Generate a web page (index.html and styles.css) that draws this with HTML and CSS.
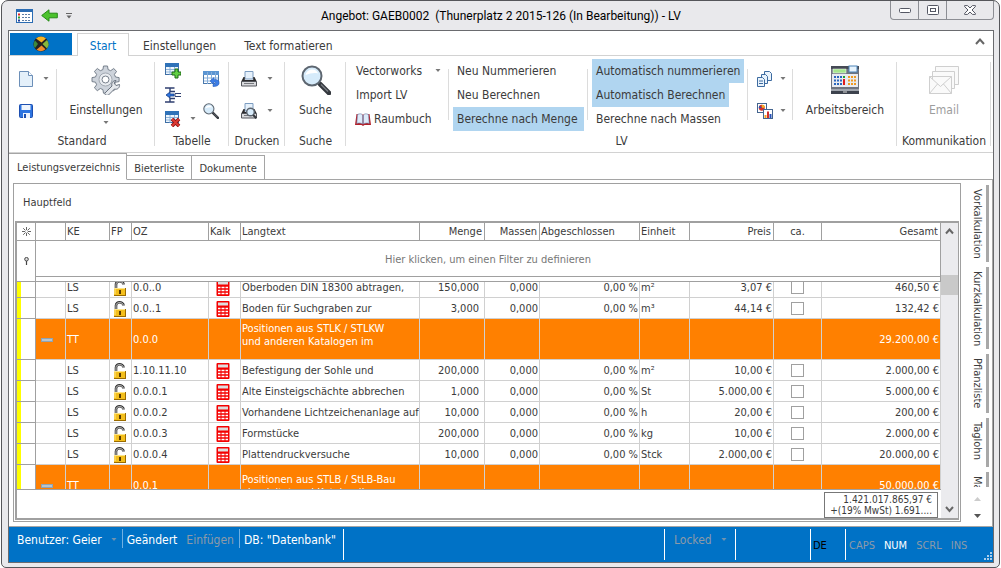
FILE: index.html
```html
<!DOCTYPE html>
<html lang="de">
<head>
<meta charset="utf-8">
<title>Angebot: GAEB0002 - LV</title>
<link rel="stylesheet" href="styles.css">
</head>
<body>
<svg class="defs" aria-hidden="true">
  <symbol id="i-lock" viewBox="0 0 14 16">
    <path d="M3 8V4.500C3 2 4.800 1.300 6.500 1.300S10.500 2.200 10.500 4.500" fill="none" stroke="#333" stroke-width="2.600"/>
    <path d="M3 8V4.500C3 2.400 5 1.500 6.500 1.500S10.300 2.400 10.300 4.300" fill="none" stroke="#d5d5d5" stroke-width=".9"/>
    <rect x="1" y="8" width="12" height="8" fill="#f4bf1c"/>
    <path d="M1 8.500h12M2 8v6" stroke="#fde58a" fill="none"/>
    <path d="M1 15.500h12M12.500 8v7" stroke="#9a6b00" fill="none"/>
    <rect x="6" y="10" width="2" height="4" fill="#5a3b00"/>
  </symbol>
  <symbol id="i-calc" viewBox="0 0 14 16">
    <rect x=".5" y="0" width="13" height="16" rx="1" fill="#f40000"/>
    <rect x="2" y="1.500" width="10" height="3" fill="#dedede"/>
    <path d="M2 7.500h2.500m1 0h3m1 0h2.500M2 10.500h2.500m1 0h3m1 0h2.500M2 13.500h2.500m1 0h3m1 0h2.500" stroke="#fff" stroke-width="1.400"/>
  </symbol>
  <symbol id="i-down" viewBox="0 0 6 4"><path d="M0.500 0h5L3 3z" fill="currentColor"/></symbol>
  <symbol id="i-table" viewBox="0 0 16 16">
    <rect x=".5" y=".5" width="13" height="11" fill="#eef6fd" stroke="#3f6fa5"/>
    <rect x="0" y="0" width="14" height="4" fill="#2f72b8"/>
    <path d="M1 6.500h12M1 9h12M5 4v8M9.500 4v8" stroke="#83add6" stroke-width=".9"/>
  </symbol>
  <symbol id="i-glass" viewBox="0 0 30 30">
    <path d="M19 19l9 9" stroke="#34383e" stroke-width="4.600" stroke-linecap="round"/>
    <path d="M20 19.500l7 7" stroke="#7b8087" stroke-width="1.200"/>
    <circle cx="11" cy="11" r="9.500" fill="#d6ebfa" stroke="#5d6670" stroke-width="2"/>
    <path d="M4.500 10c1-4 4-5.500 7-5.500s5 2 5.500 4c-4-1-8 0-12.500 1.500z" fill="#fff"/>
  </symbol>
  <symbol id="i-printer" viewBox="0 0 16 16">
    <path d="M4 8V.5h8V8z" fill="#e6f1fb" stroke="#7c9cc0"/>
    <path d="M2.500 6L.5 10v3h15v-3l-2-4h-1.300v3H3.800V6z" fill="#2c2c2e"/>
    <path d="M.5 10.500h15v4.500H.5z" fill="#d9dadd" stroke="#55575c"/>
    <path d="M3 12.500h10" stroke="#77797e"/>
  </symbol>
</svg>

<div class="window">
  <header class="titlebar">
    <div class="quick">
      <svg width="17" height="14" viewBox="0 0 17 14"><rect x=".5" y=".5" width="16" height="13" fill="#fff" stroke="#2b6cb3"/><path d="M0 1h17v2H0z" fill="#2b6cb3"/><path d="M2 5.500h2" stroke="#e02020" stroke-width="2"/><path d="M2 8.500h2" stroke="#2a9a2a" stroke-width="2"/><path d="M2 11.500h2" stroke="#233f9a" stroke-width="2"/><path d="M6 5.500h9M6 8.500h9M6 11.500h9" stroke="#5d7da5" stroke-dasharray="2 1"/></svg>
      <svg width="17" height="13" viewBox="0 0 17 13"><path d="M.7 6.500L8 .8v3.400h8.300v4.600H8v3.400z" fill="#4cc22d" stroke="#268a17"/></svg>
      <svg width="6" height="6" viewBox="0 0 6 6"><path d="M0 .5h6" stroke="#666"/><path d="M0.500 2.500h5L3 5.500z" fill="#666"/></svg>
    </div>
    <h1 class="title">Angebot: GAEB0002&nbsp; (Thunerplatz 2 2015-126 (In Bearbeitung)) - LV</h1>
    <div class="winbuttons">
      <button aria-label="Minimieren"><svg width="12" height="5"><rect x=".5" y=".5" width="11" height="4" rx="1" fill="#fff" stroke="#555864"/></svg></button>
      <button aria-label="Maximieren"><svg width="12" height="10"><rect x=".5" y=".5" width="11" height="9" rx="1" fill="#fff" stroke="#555864"/><rect x="3.500" y="3.500" width="5" height="3" fill="#fff" stroke="#555864"/></svg></button>
      <button class="close" aria-label="Schließen"><svg width="12" height="10" viewBox="0 0 12 10"><path d="M.6.600h3L6 3 8.400.600h3v1L8 5l3.400 3.400v1h-3L6 7 3.600 9.400h-3v-1L4 5 .6 1.600z" fill="#fff" stroke="#555864"/></svg></button>
    </div>
  </header>

  <main class="client">
    <nav class="ribbon-tabs">
      <button class="app" aria-label="Anwendungsmenü"><svg width="16" height="16" viewBox="0 0 16 16"><circle cx="8" cy="8" r="7.600" fill="#222"/><path d="M3 2.500a7.500 7.500 0 0 1 10 0L8.500 6.500z" fill="#f5b324"/><path d="M14 4a7 7 0 0 1 0 8.500L9.500 8z" fill="#86b83b"/><path d="M3.500 13.800a7.500 7.500 0 0 0 9-.5L8.500 9.500z" fill="#f08a2c"/><path d="M2 4.500C0 7.500.5 10.500 2 12l3-4z" fill="#3d8a3c"/></svg></button>
      <button class="rtab on">Start</button>
      <button class="rtab">Einstellungen</button>
      <button class="rtab">Text formatieren</button>
      <button class="collapse" aria-label="Menüband minimieren"><svg width="10" height="7"><path d="M1 6l4-4.500L9 6" fill="none" stroke="#666" stroke-width="2"/></svg></button>
    </nav>

    <div class="ribbon">
      <section class="group g-standard">
        <div class="items">
          <div class="pair">
            <button aria-label="Neu"><svg width="14" height="16" viewBox="0 0 14 16"><path d="M.5.500h9l4 4v11H.5z" fill="#e4f0fa" stroke="#6c8fb8"/><path d="M9.500.500v4h4" fill="#fff" stroke="#6c8fb8"/></svg><svg class="dd"><use href="#i-down"/></svg></button>
            <button aria-label="Speichern"><svg width="14" height="14" viewBox="0 0 14 14"><rect x=".5" y=".5" width="13" height="13" rx="1" fill="#2d74e0" stroke="#1d4fb0"/><rect x="2.500" y="1" width="9" height="5" fill="#eef4fc"/><rect x="4" y="9" width="7" height="5" fill="#eef4fc"/><rect x="5" y="10" width="2" height="4" fill="#1d4fb0"/></svg></button>
          </div>
          <button class="big"><svg width="30" height="30" viewBox="0 0 30 30"><path d="M12.500 1h4l.6 3.600 2.600 1.100 3-2.200 2.900 2.900-2.200 3 1.100 2.600 3.600.6v4l-3.600.6-1.100 2.600 2.200 3-2.900 2.900-3-2.200-2.600 1.100-.6 3.600h-4l-.6-3.600-2.600-1.100-3 2.200-2.900-2.900 2.200-3-1.100-2.600L1 16.600v-4l3.500-.6 1.100-2.600-2.200-3 2.900-2.900 3 2.200 2.600-1.100z" fill="#cdd3db" stroke="#77808c"/><circle cx="14.500" cy="14.500" r="6.500" fill="#e9ecf0" stroke="#a1a8b1"/><circle cx="14.500" cy="14.500" r="3.500" fill="#fff" stroke="#77808c"/><path d="M14 28l7-7c-1-3 1-5.500 4-5.500l-2 2.500 2 2.500 3.500-1c.5 3-2 5.500-5 4.500l-6 6c-2 1-4.500-.5-3.500-2z" fill="#e6e9ed" stroke="#6b7480"/></svg><span>Einstellungen</span><svg class="dd"><use href="#i-down"/></svg></button>
        </div>
        <h2>Standard</h2>
      </section>

      <section class="group g-tabelle">
        <div class="items">
          <div class="trio">
            <button aria-label="Zeile einfügen"><svg width="16" height="16" viewBox="0 0 16 16"><use href="#i-table"/><path d="M9 7h3v3h3v3h-3v3H9v-3H6v-3h3z" transform="translate(1 -1)" fill="#62d044" stroke="#1e6b16"/></svg></button>
            <button aria-label="Einrücken"><svg width="16" height="16" viewBox="0 0 16 16"><path d="M0 1h9.500M0 15h9.500M5 1v3.500h5M5 15v-3.500h5" stroke="#2f3f70" stroke-width="1.400" fill="none"/><path d="M1 8l4-3v2h4v2H5v2z" fill="#2d74e0" stroke="#173f86" stroke-width=".8"/><path d="M16 6.500h-6v3h6" fill="#fff" stroke="#2f3f70"/></svg></button>
            <button aria-label="Zeile löschen"><svg width="16" height="16" viewBox="0 0 16 16"><use href="#i-table"/><path d="M7 8l7 7M14 8l-7 7" stroke="#8a1010" stroke-width="3.600"/><path d="M7 8l7 7M14 8l-7 7" stroke="#dc3a33" stroke-width="2"/></svg><svg class="dd"><use href="#i-down"/></svg></button>
          </div>
          <div class="pair">
            <button aria-label="Aktualisieren"><svg width="17" height="16" viewBox="0 0 17 16"><rect x=".5" y=".5" width="15" height="12" fill="#fff" stroke="#4a79ad"/><rect width="16" height="4" fill="#5b95d2"/><path d="M1 7h14M1 10h14M4.500 1v12M8.500 1v12M12.500 1v12" stroke="#86aed9"/><path d="M7 10l4-3.500v2.200c4-.5 5.500 1.500 5 4-.4 1.800-2.500 3-6 2.800v-2c3.500.2 4-2.500 1-2.500v2.500z" fill="#3c7de6" stroke="#2a61c0" stroke-width=".6"/></svg></button>
            <button aria-label="Suchen in Tabelle"><svg width="16" height="16"><use href="#i-glass"/></svg></button>
          </div>
        </div>
        <h2>Tabelle</h2>
      </section>

      <section class="group g-drucken">
        <div class="items">
          <div class="pair">
            <button aria-label="Drucken"><svg width="16" height="16"><use href="#i-printer"/></svg><svg class="dd"><use href="#i-down"/></svg></button>
            <button aria-label="Seitenansicht"><svg width="16" height="16" viewBox="0 0 16 16"><use href="#i-printer"/><circle cx="9.500" cy="9" r="3.800" fill="#d8ecfb" stroke="#59626c" stroke-width="1.400"/><path d="M12.300 12l3 3.300" stroke="#33373d" stroke-width="2"/></svg><svg class="dd"><use href="#i-down"/></svg></button>
          </div>
        </div>
        <h2>Drucken</h2>
      </section>

      <section class="group g-suche">
        <div class="items">
          <button class="big"><svg width="30" height="30"><use href="#i-glass"/></svg><span>Suche</span></button>
        </div>
        <h2>Suche</h2>
      </section>

      <section class="group g-lv">
        <div class="items">
          <div class="list l-import">
            <button>Vectorworks<svg class="dd"><use href="#i-down"/></svg></button>
            <button>Import LV</button>
            <button class="book"><svg width="16" height="13" viewBox="0 0 16 13"><path d="M1.500 1H7l1 1 1-1h5.500L16 12H9.500L8 13l-1.500-1H0z" fill="#b3202a"/><path d="M2.500 1.500C4.500.500 6.500.500 7.600 2v9C6 9.800 3.500 9.800 1.800 10.500zM13.500 1.500c-2-1-4-1-5.100.5v9c1.600-1.200 4.100-1.200 5.800-.5z" fill="#dcebfa" stroke="#6e7fa6" stroke-width=".6"/></svg>Raumbuch</button>
          </div>
          <div class="list l-new">
            <button>Neu Nummerieren</button>
            <button>Neu Berechnen</button>
            <button class="on">Berechne nach Menge</button>
          </div>
          <div class="list l-auto">
            <button class="on">Automatisch nummerieren</button>
            <button class="on">Automatisch Berechnen</button>
            <button>Berechne nach Massen</button>
          </div>
          <div class="pair p-copy">
            <button aria-label="Kopieren"><svg width="16" height="16" viewBox="0 0 16 16"><g fill="#e9f3fc" stroke="#3d6ba0"><path d="M7.500.500h5l2 2v7h-7z"/><path d="M4.500 3.500h4l2 2v7h-6z"/><path d="M.5 6.500h5l2 2v7h-7z"/></g><path d="M2 10h4M2 12.500h4" stroke="#3d6ba0"/></svg><svg class="dd"><use href="#i-down"/></svg></button>
            <button aria-label="Diagramme"><svg width="16" height="16" viewBox="0 0 16 16"><rect x=".5" y=".5" width="9" height="9" fill="#fff" stroke="#44658f"/><circle cx="4.800" cy="4.800" r="3" fill="#d2302b"/><path d="M4.800 4.800V1.800a3 3 0 0 1 3 3z" fill="#f5b324"/><path d="M4.800 4.800l-3 .4a3 3 0 0 1 .8-2.400z" fill="#2852b8"/><rect x="6.500" y="6.500" width="9" height="9" fill="#fff" stroke="#44658f"/><path d="M8.500 15v-3" stroke="#f5a020" stroke-width="2"/><path d="M11 15V8.500" stroke="#d2302b" stroke-width="2"/><path d="M13.500 15v-4" stroke="#2852b8" stroke-width="2"/></svg><svg class="dd"><use href="#i-down"/></svg></button>
          </div>
          <button class="big"><svg width="30" height="30" viewBox="0 0 30 30"><rect x="1" y="1" width="28" height="28" fill="#6e747f"/><path d="M1 1h28v3H1z" fill="#454a55"/><path d="M2 9h26v13H2z" fill="#e8ebf0"/><rect x="3" y="4" width="13" height="4" fill="#a5e58d" stroke="#fff" stroke-width=".5"/><rect x="19" y="1" width="8" height="6" fill="#e6f3fd" stroke="#4c83b8"/><path d="M4 12h8M4 15.500h8M4 19h8" stroke="#2966bd" stroke-width="2" stroke-dasharray="2 1"/><path d="M18 12h9M18 15.500h9M18 19h9" stroke="#f09a20" stroke-width="2" stroke-dasharray="2 1"/><path d="M14 14v6" stroke="#e01d1d" stroke-width="2"/><path d="M13 12h2" stroke="#20a030" stroke-width="2"/><path d="M1 25h28" stroke="#d3d7dd"/><path d="M1 26h28v3H1z" fill="#3d424d"/><path d="M13 27h4" stroke="#ddd"/></svg><span>Arbeitsbereich</span></button>
        </div>
        <h2>LV</h2>
      </section>

      <section class="group g-komm">
        <div class="items">
          <button class="big" disabled><svg width="30" height="28" viewBox="0 0 30 28"><g fill="#fafafa" stroke="#cfcfcf"><path d="M6.500.500h23v18h-23z"/><path d="M3.500 5.500h22v17h-22z"/><path d="M.5 10.500h22v17H.5zM.5 10.500l11 10 11-10M.5 27.500l8-9.500M22.500 27.500l-8-9.500"/></g></svg><span>Email</span></button>
        </div>
        <h2>Kommunikation</h2>
      </section>
    </div>

    <div class="workspace">
      <nav class="doc-tabs">
        <button class="on">Leistungsverzeichnis</button>
        <button>Bieterliste</button>
        <button>Dokumente</button>
      </nav>
      <div class="page">
        <section class="panel">
          <h3>Hauptfeld</h3>
          <div class="grid">
            <div class="tables">
              <table class="head">
                <colgroup><col class="c-ind"><col class="c-exp"><col class="c-ke"><col class="c-fp"><col class="c-oz"><col class="c-kalk"><col><col class="c-menge"><col class="c-massen"><col class="c-abg"><col class="c-einheit"><col class="c-preis"><col class="c-ca"><col class="c-gesamt"></colgroup>
                <thead>
                  <tr><th class="mid"><svg width="9" height="9" viewBox="0 0 9 9"><path d="M4.500 0v9M0 4.500h9M1.200 1.200l6.600 6.600M7.800 1.200L1.200 7.800" stroke="#555" stroke-width=".9"/><circle cx="4.500" cy="4.500" r="1.400" fill="#fff"/></svg></th><th></th><th>KE</th><th>FP</th><th>OZ</th><th>Kalk</th><th>Langtext</th><th class="num">Menge</th><th class="num">Massen</th><th>Abgeschlossen</th><th>Einheit</th><th class="num">Preis</th><th class="mid">ca.</th><th class="num">Gesamt</th></tr>
                  <tr class="filter"><td class="mid"><svg width="5" height="8" viewBox="0 0 5 8"><circle cx="2.500" cy="2.200" r="1.800" fill="#ddd" stroke="#444"/><path d="M2.500 4v4" stroke="#444" stroke-width="1.200"/></svg></td><td colspan="13">Hier klicken, um einen Filter zu definieren</td></tr>
                </thead>
              </table>
              <div class="rows">
                <table class="body">
                  <colgroup><col class="c-ind"><col class="c-exp"><col class="c-ke"><col class="c-fp"><col class="c-oz"><col class="c-kalk"><col><col class="c-menge"><col class="c-massen"><col class="c-abg"><col class="c-einheit"><col class="c-preis"><col class="c-ca"><col class="c-gesamt"></colgroup>
                  <tbody>
                    <tr><td></td><td></td><td>LS</td><td class="ic"><svg class="lock"><use href="#i-lock"/></svg></td><td>0.0..0</td><td class="ic"><svg class="calc"><use href="#i-calc"/></svg></td><td>Oberboden DIN 18300 abtragen,</td><td class="num m">150,000</td><td class="num">0,000</td><td class="num">0,00 %</td><td>m²</td><td class="num">3,07 €</td><td class="mid"><input type="checkbox" aria-label="ca. 0.0..0"></td><td class="num">460,50 €</td></tr>
                    <tr><td></td><td></td><td>LS</td><td class="ic"><svg class="lock"><use href="#i-lock"/></svg></td><td>0.0..1</td><td class="ic"><svg class="calc"><use href="#i-calc"/></svg></td><td>Boden für Suchgraben zur</td><td class="num m">3,000</td><td class="num">0,000</td><td class="num">0,00 %</td><td>m³</td><td class="num">44,14 €</td><td class="mid"><input type="checkbox" aria-label="ca. 0.0..1"></td><td class="num">132,42 €</td></tr>
                    <tr class="title-row"><td></td><td class="exp"><i class="minus"></i></td><td>TT</td><td></td><td>0.0.0</td><td></td><td class="long raised">Positionen aus STLK / STLKW<br>und anderen Katalogen im</td><td></td><td></td><td></td><td></td><td></td><td></td><td class="num">29.200,00 €</td></tr>
                    <tr><td></td><td></td><td>LS</td><td class="ic"><svg class="lock"><use href="#i-lock"/></svg></td><td>1.10.11.10</td><td class="ic"><svg class="calc"><use href="#i-calc"/></svg></td><td>Befestigung der Sohle und</td><td class="num m">200,000</td><td class="num">0,000</td><td class="num">0,00 %</td><td>m²</td><td class="num">10,00 €</td><td class="mid"><input type="checkbox" aria-label="ca. 1.10.11.10"></td><td class="num">2.000,00 €</td></tr>
                    <tr><td></td><td></td><td>LS</td><td class="ic"><svg class="lock"><use href="#i-lock"/></svg></td><td>0.0.0.1</td><td class="ic"><svg class="calc"><use href="#i-calc"/></svg></td><td>Alte Einsteigschächte abbrechen</td><td class="num m">1,000</td><td class="num">0,000</td><td class="num">0,00 %</td><td>St</td><td class="num">5.000,00 €</td><td class="mid"><input type="checkbox" aria-label="ca. 0.0.0.1"></td><td class="num">5.000,00 €</td></tr>
                    <tr><td></td><td></td><td>LS</td><td class="ic"><svg class="lock"><use href="#i-lock"/></svg></td><td>0.0.0.2</td><td class="ic"><svg class="calc"><use href="#i-calc"/></svg></td><td>Vorhandene Lichtzeichenanlage auf</td><td class="num m">10,000</td><td class="num">0,000</td><td class="num">0,00 %</td><td>h</td><td class="num">20,00 €</td><td class="mid"><input type="checkbox" aria-label="ca. 0.0.0.2"></td><td class="num">200,00 €</td></tr>
                    <tr><td></td><td></td><td>LS</td><td class="ic"><svg class="lock"><use href="#i-lock"/></svg></td><td>0.0.0.3</td><td class="ic"><svg class="calc"><use href="#i-calc"/></svg></td><td>Formstücke</td><td class="num m">200,000</td><td class="num">0,000</td><td class="num">0,00 %</td><td>kg</td><td class="num">10,00 €</td><td class="mid"><input type="checkbox" aria-label="ca. 0.0.0.3"></td><td class="num">2.000,00 €</td></tr>
                    <tr><td></td><td></td><td>LS</td><td class="ic"><svg class="lock"><use href="#i-lock"/></svg></td><td>0.0.0.4</td><td class="ic"><svg class="calc"><use href="#i-calc"/></svg></td><td>Plattendruckversuche</td><td class="num m">10,000</td><td class="num">0,000</td><td class="num">0,00 %</td><td>Stck</td><td class="num">2.000,00 €</td><td class="mid"><input type="checkbox" aria-label="ca. 0.0.0.4"></td><td class="num">20.000,00 €</td></tr>
                    <tr class="title-row"><td></td><td class="exp"><i class="minus"></i></td><td>TT</td><td></td><td>0.0.1</td><td></td><td class="long">Positionen aus STLB / StLB-Bau<br>abgeleitet und Katalog (im</td><td></td><td></td><td></td><td></td><td></td><td></td><td class="num">50.000,00 €</td></tr>
                  </tbody>
                </table>
              </div>
              <div class="sum"><output>1.421.017.865,97 €<br>+(19% MwSt) 1.691....</output></div>
            </div>
            <div class="scroll">
              <button aria-label="Nach oben"><svg width="9" height="7"><path d="M1 5.500l3.500-4 3.500 4" fill="none" stroke="#666" stroke-width="2"/></svg></button>
              <div class="track"><div class="thumb"></div></div>
              <button aria-label="Nach unten"><svg width="9" height="7"><path d="M1 1l3.500 4L8 1" fill="none" stroke="#666" stroke-width="2"/></svg></button>
            </div>
          </div>
        </section>
        <aside class="side">
          <button class="s1">Vorkalkulation</button>
          <button class="s2">Kurzkalkulation</button>
          <button class="s3">Pflanzliste</button>
          <button class="s4">Taglohn</button>
          <button class="s5">Massen</button>
          <div class="pager">
            <svg width="7" height="4"><path d="M0 4l3.500-4L7 4z" fill="#ccc"/></svg>
            <svg width="7" height="4"><path d="M0 0h7L3.500 4z" fill="#555"/></svg>
          </div>
        </aside>
      </div>
    </div>

    <footer class="status">
      <div class="cell left"><span class="user">Benutzer: Geier</span><svg class="dd"><use href="#i-down"/></svg><i></i><span>Geändert</span><span class="dim ins">Einfügen</span><i></i><span>DB: "Datenbank"</span></div>
      <div class="cell fill"></div>
      <div class="cell lock-cell"><span class="dim">Locked</span><svg class="dd"><use href="#i-down"/></svg></div>
      <div class="cell blank"></div>
      <div class="cell lang">DE</div>
      <div class="cell keys"><span class="dim">CAPS</span><span>NUM</span><span class="dim">SCRL</span><span class="dim">INS</span><svg class="grip" width="9" height="9" viewBox="0 0 9 9"><path d="M6 0h2v2H6zM3 3h2v2H3zM6 3h2v2H6zM0 6h2v2H0zM3 6h2v2H3zM6 6h2v2H6z" fill="#a9cdea"/></svg></div>
    </footer>
  </main>
</div>
</body>
</html>
```
FILE: styles.css
```css
* { box-sizing: border-box; }
html, body { height: 100%; margin: 0; }
body {
  background: #fff;
  color: #3b3b3b;
  font: 12px/16px "DejaVu Sans Condensed", "Noto Sans", sans-serif;
  overflow: hidden;
}
button { margin: 0; padding: 0; border: 0; background: none; color: inherit; font: inherit; }
h1, h2, h3 { margin: 0; font: inherit; }
svg { display: block; flex: none; }
.defs { position: absolute; width: 0; height: 0; }
.dd { width: 6px; height: 4px; color: #777; }
.dim { color: #8d9aa8; }

.window {
  display: flex;
  flex-direction: column;
  height: 100vh;
  margin: 0 1px;
  padding: 0 5px 4px 6px;
  border: 1px solid #55565a;
  border-radius: 7px 7px 5px 5px;
  background: #e9e9ec;
}

/* Title bar */
.titlebar { display: grid; grid-template-columns: 1fr auto 1fr; height: 29px; }
.quick { display: flex; align-items: center; gap: 8px; padding-left: 8px; }
.title { align-self: center; color: #000; font: 12px/18px Roboto, "Noto Sans", sans-serif; white-space: nowrap; }
.winbuttons { display: flex; justify-self: end; height: 19px; border: 1px solid #8c8e94; border-top: 0; border-radius: 0 0 4px 4px; }
.winbuttons button { display: flex; align-items: center; justify-content: center; width: 28px; border-right: 1px solid #8c8e94; }
.winbuttons .close { width: 46px; border-right: 0; }

.client { display: flex; flex: 1; flex-direction: column; min-height: 0; border: 1px solid #6a6b6f; background: #fff; }

/* Ribbon */
.ribbon-tabs { display: flex; height: 25px; padding: 2px 1px 0; border-bottom: 1px solid #d2d2d2; }
.app { display: flex; align-items: center; justify-content: center; width: 62px; margin-right: 5px; background: #0072c6; }
.rtab { height: 23px; padding: 2px 14px 0; }
.rtab.on { width: 52px; padding: 1px 0 0; border: 1px solid #d2d2d2; border-bottom: 0; background: #fff; color: #0072c6; }
.collapse { margin-left: auto; padding: 0 7px 5px 0; }

.ribbon { display: flex; height: 97px; border-bottom: 1px solid #d2d2d2; }
.group { display: flex; flex-direction: column; padding-top: 3px; background: linear-gradient(#dcdcdc, #dcdcdc) right 6px / 1px 84px no-repeat; }
.group h2 { flex: none; line-height: 21px; text-align: center; white-space: nowrap; }
.items { display: flex; flex: none; height: 72px; }
.g-standard { width: 146px; }
.g-tabelle { width: 74px; }
.g-drucken { width: 56px; }
.g-suche { width: 61px; }
.g-lv { width: 551px; }
.g-komm { width: 94px; }
.pair { display: flex; flex-direction: column; justify-content: center; }
.pair button { display: flex; align-items: center; gap: 10px; height: 32px; }
.g-standard .pair { width: 48px; padding-left: 10px; background: linear-gradient(#dcdcdc, #dcdcdc) right 10px / 1px 51px no-repeat; }
.trio button { display: flex; align-items: center; gap: 9px; height: 24px; }
.g-tabelle .trio { width: 48px; padding-left: 10px; }
.g-drucken .pair { padding-left: 12px; }
.big { display: flex; flex: 1; flex-direction: column; align-items: center; padding-top: 6px; }
.big span { margin: 7px 0 3px; }
.big:disabled { color: #9d9d9d; }
.big:disabled svg { margin: 1px 0; }
.list button { display: flex; align-items: center; height: 24px; padding: 0 4px; white-space: nowrap; }
.list .on { background: #b0d5f0; }
.list, .p-copy { background: linear-gradient(#dcdcdc, #dcdcdc) right 10px / 1px 51px no-repeat; }
.l-import { width: 103px; padding-left: 6px; }
.l-import .dd { margin-left: 13px; }
.l-import .book { gap: 3px; padding-left: 3px; }
.l-new { width: 139px; padding-left: 4px; }
.l-new .on { padding-right: 6px; }
.l-auto { width: 160px; padding-left: 4px; }
.p-copy { width: 45px; padding-left: 9px; }
.pair.p-copy button { gap: 7px; }

/* Work area */
.workspace { display: flex; flex: 1; flex-direction: column; min-height: 0; font-size: 11px; }
.doc-tabs { display: flex; align-items: flex-end; height: 27px; border-bottom: 1px solid #a5a5a5; }
.doc-tabs button { height: 25px; margin-bottom: -1px; padding: 3px 7px 0; border: 1px solid #a5a5a5; border-left: 0; white-space: nowrap; }
.doc-tabs .on { height: 27px; padding: 2px 6px 0 8px; border-bottom-color: #fff; background: #fff; }
.page { display: flex; flex: 1; min-height: 0; padding: 3px 0 4px 4px; border-right: 1px solid #a5a5a5; border-bottom: 1px solid #a5a5a5; }
.panel { display: flex; flex: 1; flex-direction: column; min-width: 0; padding: 0 1px 1px; border: 1px solid #a0a0a0; }
.panel h3 { padding: 11px 8px 10px; }
.grid { display: flex; flex: 1; min-height: 0; border: solid #a0a0a0; border-width: 2px 1px 2px 2px; }
.tables { display: flex; flex: 1; flex-direction: column; min-width: 0; }
table { width: 100%; border-spacing: 0; table-layout: fixed; }
th, td { overflow: hidden; padding: 0 1px; border: 0 solid #d0d0d0; font-weight: normal; text-align: left; white-space: nowrap; }
.c-ind { width: 19px; } .c-exp { width: 30px; } .c-ke { width: 44px; } .c-fp { width: 22px; }
.c-oz { width: 77px; } .c-kalk { width: 32px; } .c-menge { width: 65px; } .c-massen { width: 55px; }
.c-abg { width: 100px; } .c-einheit { width: 50px; } .c-preis { width: 84px; } .c-ca { width: 48px; } .c-gesamt { width: 119px; }
.num { text-align: right; }
.mid { text-align: center; }
.mid svg { margin: auto; }
.body .m { padding-right: 5px; }
.head { height: 59px; border-bottom: 1px solid #a0a0a0; }
.head th { height: 18px; border: solid #a0a0a0; border-width: 0 1px 1px 0; line-height: 16px; }
.head .num { padding-right: 2px; }
.filter td { height: 40px; border-right: 1px solid #a0a0a0; color: #777; text-align: center; }
.filter td + td { padding-bottom: 3px; background: linear-gradient(#a0a0a0, #a0a0a0) left 0 bottom 4px / 100% 1px no-repeat; }
.rows { flex: 1; min-height: 0; overflow: hidden; border-bottom: 1px solid #a0a0a0; }
.body { margin-top: -5px; }
.body td { height: 21px; border-width: 0 1px 1px 0; line-height: 14px; padding-top: 1px; }
.body td:first-child { border-color: #a0a0a0; background: linear-gradient(#ff0, #ff0) left / 4px 100% no-repeat; }
.body .ic { padding: 2px 0 0; }
.lock, .calc { width: 14px; height: 16px; }
.lock { margin-left: 3px; }
.calc { margin-left: 7px; }
.body .title-row td { height: 41px; color: #fff; line-height: 13px; }
.title-row td + td { background: #ff8000; }
.title-row .raised { padding-bottom: 9px; }
.title-row .exp { padding-left: 5px; }
.minus { display: block; width: 12px; height: 4px; border: 1px solid #8fa3b3; background: #b9c4cc; }
input[type="checkbox"] { display: block; width: 13px; height: 13px; margin: 0 auto; appearance: none; border: 1px solid #a0a0a0; background: #fff; }
.body .mid { padding-top: 0; }
.sum { display: flex; justify-content: flex-end; padding: 2px 3px 0; }
.sum output { width: 114px; padding: 1px 5px; border: 1px solid #777; font-size: 10px; line-height: 11px; text-align: right; white-space: nowrap; }

.scroll { display: flex; flex-direction: column; width: 17px; background: #ebebee; }
.scroll button { display: flex; align-items: center; justify-content: center; height: 17px; }
.track { flex: 1; padding-top: 35px; }
.thumb { height: 20px; background: #c9c9c9; }

.side { display: flex; flex-direction: column; gap: 5px; width: 31px; padding: 2px 3px 0 0; overflow: hidden; }
.side button { flex: none; width: 20px; margin-left: auto; padding-top: 4px; border-right: 3px solid #a8a8a8; line-height: 17px; overflow: hidden; text-align: left; writing-mode: vertical-rl; white-space: nowrap; }
.s1 { height: 77px; } .s2 { height: 82px; } .s3 { height: 59px; } .s4 { height: 49px; } .s5 { height: 15px; }
.pager { display: flex; flex-direction: column; align-items: center; gap: 13px; padding: 5px 0 0 4px; }

/* Status bar */
.status { display: flex; height: 35px; background: #0072c6; color: #fff; white-space: nowrap; }
.cell { display: flex; margin: 2px 0; border-right: 1px solid #fff; }
.left { align-items: flex-start; padding: 0 7px 0 8px; line-height: 22px; }
.left i { width: 1px; height: 19px; margin: 0 4px 0 5px; background: #6fb0e2; }
.status .dd { margin: 9px 0 0 9px; color: #6f93b0; }
.left .ins { margin-left: 9px; }
.fill { flex: 1; }
.lock-cell { width: 71px; padding-left: 9px; line-height: 22px; }
.blank { width: 75px; }
.lang { width: 35px; padding-left: 2px; color: #000; font-size: 11px; line-height: 34px; }
.keys { width: 147px; gap: 9px; padding-left: 3px; border: 0; font-size: 11px; line-height: 34px; }
.keys .grip { margin: 23px 0 0 auto; }
```
